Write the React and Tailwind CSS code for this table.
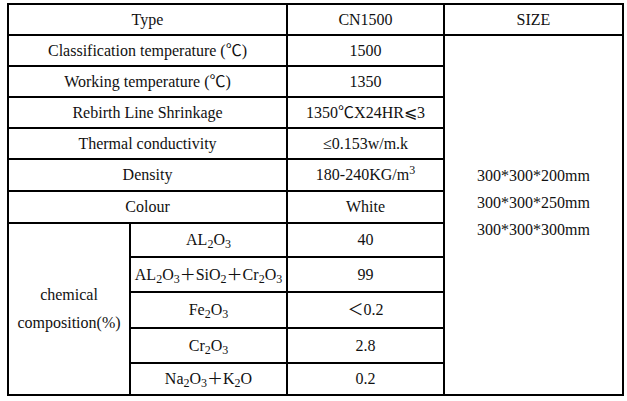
import React from 'react'

const cell = 'flex items-center justify-center bg-white'

function F({ children }) {
  return <span className="whitespace-nowrap">{children}</span>
}

const rows = [
  ['Classification temperature (℃)', '1500'],
  ['Working temperature (℃)', '1350'],
  ['Rebirth Line Shrinkage', '1350℃X24HR⩽3'],
  ['Thermal conductivity', '≤0.153w/m.k'],
  [
    'Density',
    <>
      180-240KG/m<sup>3</sup>
    </>,
  ],
  ['Colour', 'White'],
]

const chem = [
  [<>AL<sub>2</sub>O<sub>3</sub></>, '40'],
  [<>AL<sub>2</sub>O<sub>3</sub>＋SiO<sub>2</sub>＋Cr<sub>2</sub>O<sub>3</sub></>, '99'],
  [<>Fe<sub>2</sub>O<sub>3</sub></>, '＜0.2'],
  [<>Cr<sub>2</sub>O<sub>3</sub></>, '2.8'],
  [<>Na<sub>2</sub>O<sub>3</sub>＋K<sub>2</sub>O</>, '0.2'],
]

export default function App() {
  return (
    <div className="min-h-[401px] w-[627px] bg-white pt-[3px] pl-[7px] font-[family-name:'Liberation_Serif','Noto_Sans_CJK_SC',serif] text-[16px] text-[#111]">
      <div className="grid w-fit grid-cols-[120px_155px_155px_177px] grid-rows-[29px_29px_29px_29px_29px_30px_30px_32px_33px_34px_33px_30px] gap-[2px] bg-black p-[2px]">
        <div className={`${cell} col-span-2 col-start-1 row-start-1`}>Type</div>
        <div className={`${cell} col-start-3 row-start-1`}>CN1500</div>
        <div className={`${cell} col-start-4 row-start-1`}>SIZE</div>

        {rows.map(([label, value], i) => (
          <React.Fragment key={i}>
            <div className={`${cell} col-span-2 col-start-1`}>{label}</div>
            <div className={`${cell} col-start-3`}>
              <F>{value}</F>
            </div>
          </React.Fragment>
        ))}

        <div className="col-start-4 row-span-11 row-start-2 flex flex-col items-center justify-center gap-[8px] bg-white pb-[26px] leading-[19px]">
          <span>300*300*200mm</span>
          <span>300*300*250mm</span>
          <span>300*300*300mm</span>
        </div>

        <div className="col-start-1 row-span-5 row-start-8 flex flex-col items-center justify-center bg-white leading-[28px]">
          <span>chemical</span>
          <span>composition(%)</span>
        </div>

        {chem.map(([name, value], i) => (
          <React.Fragment key={i}>
            <div className={`${cell} col-start-2`}>
              <F>{name}</F>
            </div>
            <div className={`${cell} col-start-3`}>{value}</div>
          </React.Fragment>
        ))}
      </div>
    </div>
  )
}
